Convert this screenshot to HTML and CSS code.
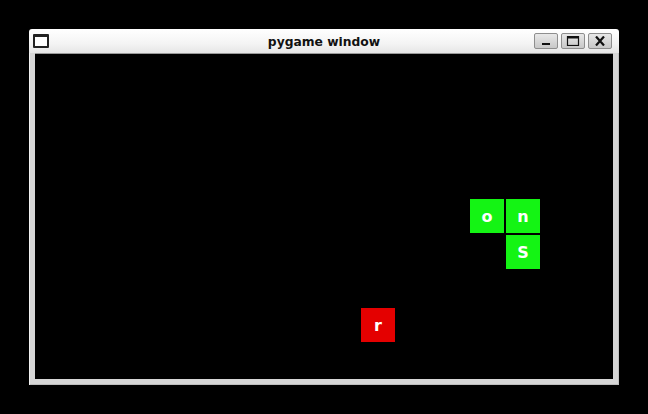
FILE: index.html
```html
<!DOCTYPE html>
<html>
<head>
<meta charset="utf-8">
<link rel="stylesheet" href="styles.css">
</head>
<body>
<div class="window">
  <div class="titlebar">
    <div class="left"><div class="appicon"></div></div>
    <div class="title">pygame window</div>
    <div class="buttons">
      <div class="btn"><svg width="12" height="10" viewBox="0 0 12 10"><rect x="2" y="7" width="8" height="2" fill="#111"/></svg></div>
      <div class="btn"><svg width="14" height="10" viewBox="0 0 14 10"><rect x="1.5" y="0.5" width="11" height="9" fill="none" stroke="#111" stroke-width="1.2"/><rect x="1.5" y="0.5" width="11" height="2" fill="#111"/></svg></div>
      <div class="btn"><svg width="12" height="10" viewBox="0 0 12 10"><path d="M2 0.5 L10 9.5 M10 0.5 L2 9.5" stroke="#111" stroke-width="2.2"/></svg></div>
    </div>
  </div>
  <div class="frame">
    <div class="canvas">
      <div class="tile green t-o">o</div>
      <div class="tile green t-n">n</div>
      <div class="tile green t-s">S</div>
      <div class="tile red t-r">r</div>
    </div>
  </div>
</div>
</body>
</html>
```

FILE: styles.css
```css
html, body {
  margin: 0;
  padding: 0;
  background: #000;
  width: 648px;
  height: 414px;
  overflow: hidden;
}
body {
  padding: 29px 0 0 29px;
  box-sizing: border-box;
}
.window {
  width: 590px;
  height: 356px;
  display: flex;
  flex-direction: column;
  border-radius: 3px 3px 0 0;
  overflow: hidden;
}
.titlebar {
  height: 24px;
  background: linear-gradient(#ffffff, #f4f4f4 60%, #e6e6e6);
  display: grid;
  grid-template-columns: 1fr auto 1fr;
  align-items: center;
  flex: none;
}
.left {
  display: flex;
  align-items: center;
}
.appicon {
  width: 12px;
  height: 9px;
  border: 2px solid #222;
  border-top-width: 3px;
  border-radius: 1px;
  margin-left: 4px;
  background: #fff;
}
.title {
  text-align: center;
  font-family: "DejaVu Sans", sans-serif;
  font-weight: bold;
  font-size: 12.3px;
  color: #111;
  margin-top: 1px;
}
.buttons {
  display: flex;
  gap: 3px;
  margin-right: 7px;
  justify-self: end;
}
.btn {
  width: 22px;
  height: 14px;
  border: 1px solid #8e8e8e;
  border-radius: 2px;
  background: linear-gradient(#e8e8e8, #c8c8c8);
  display: flex;
  align-items: center;
  justify-content: center;
}
.frame {
  flex: 1;
  background: #d6d6d6;
  padding: 0 6px 6px 6px;
  display: flex;
  box-shadow: inset 1px 0 0 #f0f0f0, inset -1px 0 0 #c0c0c0, inset 0 -1px 0 #bdbdbd;
}
.canvas {
  flex: 1;
  background: #000;
  position: relative;
  border-top: 1px solid #9a9a9a;
}
.tile {
  position: absolute;
  width: 34px;
  height: 34px;
  color: #fff;
  font-family: "DejaVu Sans", sans-serif;
  font-weight: bold;
  font-size: 16px;
  display: flex;
  align-items: center;
  justify-content: center;
}
.green { background: #14f414; }
.red { background: #e40000; }
.t-o { left: 435px; top: 145px; }
.t-n { left: 471px; top: 145px; }
.t-s { left: 471px; top: 181px; }
.t-r { left: 326px; top: 254px; }
```
